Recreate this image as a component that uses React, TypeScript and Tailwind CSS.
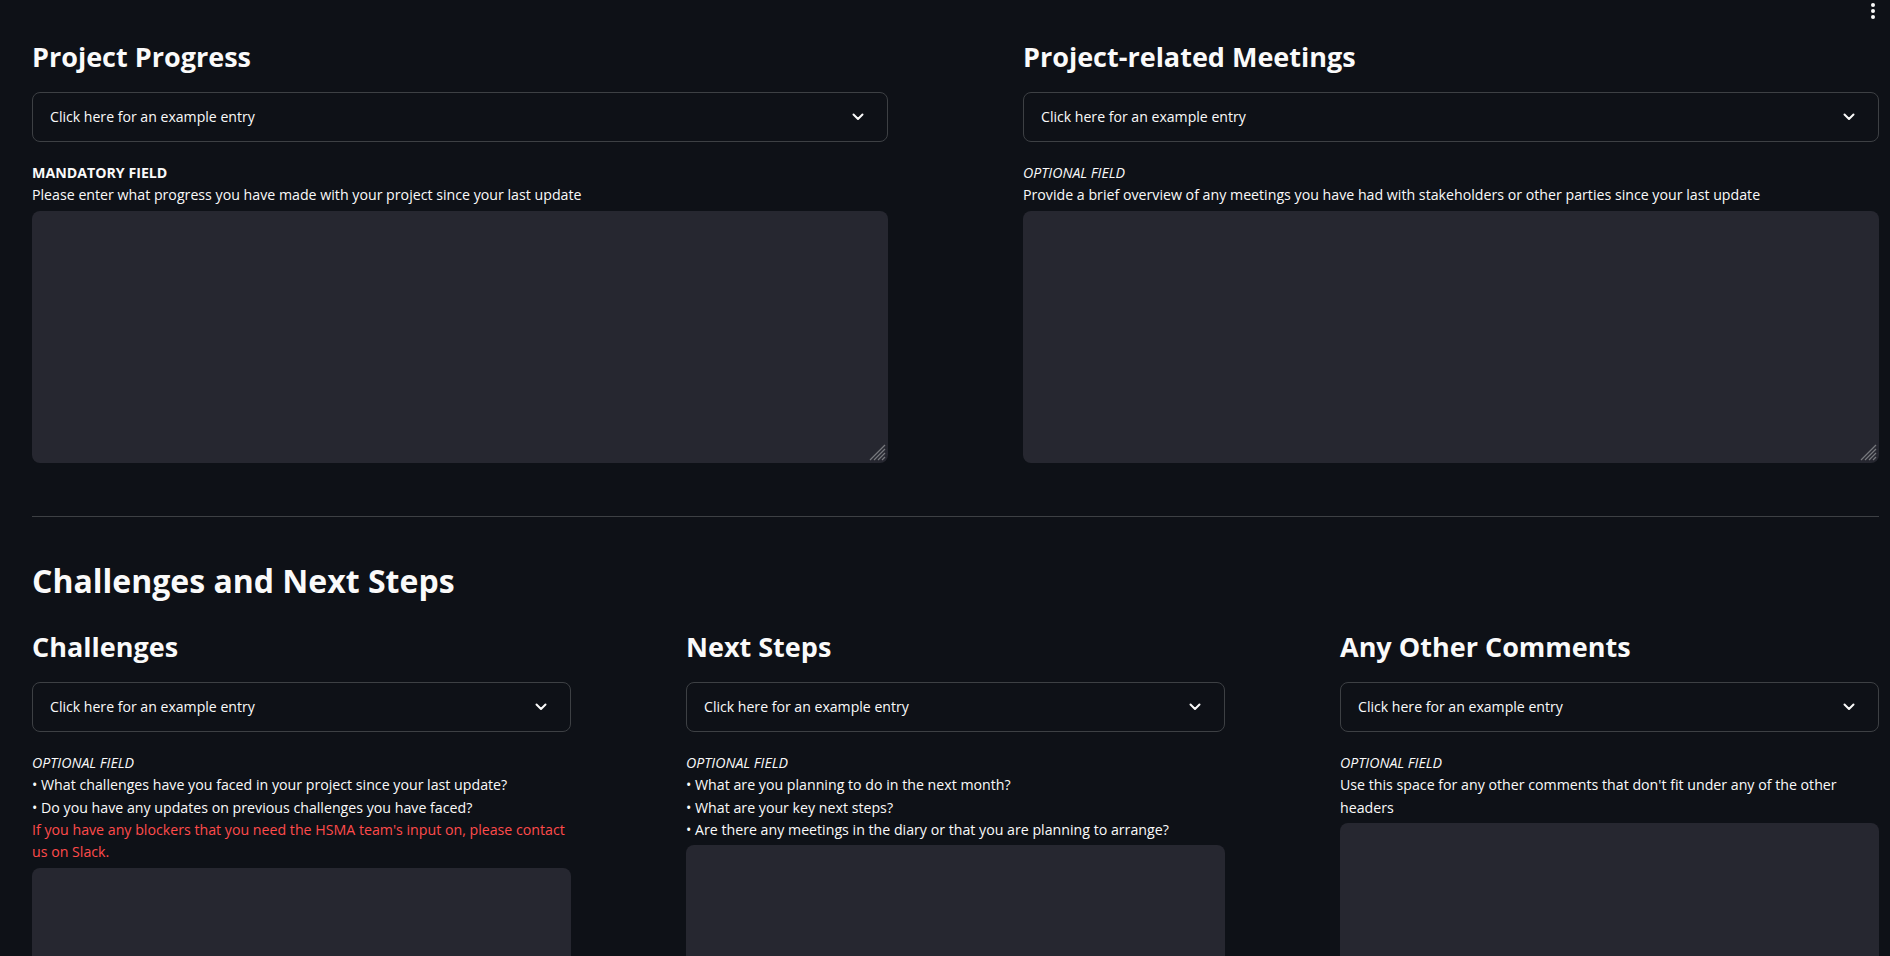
import React from 'react';

const ENTRY = 'Click here for an example entry';

function Chevron() {
  return (
    <svg width="12" height="8" viewBox="0 0 12 8" fill="none" className="shrink-0">
      <path d="M1.5 1.5 L6 6 L10.5 1.5" stroke="#fafafa" strokeWidth="2" strokeLinecap="round" strokeLinejoin="round" />
    </svg>
  );
}

function Grip() {
  return (
    <svg width="17" height="17" viewBox="0 0 17 17" className="absolute right-[2px] bottom-[2px] pointer-events-none">
      <g stroke="#77787d" strokeWidth="1.2">
        <line x1="1" y1="16" x2="16" y2="1" />
        <line x1="5" y1="16" x2="16" y2="5" />
        <line x1="9" y1="16" x2="16" y2="9" />
        <line x1="13" y1="16" x2="16" y2="13" />
      </g>
    </svg>
  );
}

function Expander() {
  return (
    <div className="h-[50px] flex items-center justify-between border border-[#3d4044] rounded-lg pl-[17px] pr-[23px] text-[14.1px] text-[#fafafa]">
      <span>{ENTRY}</span>
      <Chevron />
    </div>
  );
}

function Field({ title, children, height = 'h-[252px]' }: { title: string; children: React.ReactNode; height?: string }) {
  return (
    <div className="flex flex-col min-w-0">
      <h3 className="text-[27px] leading-[36px] font-bold text-[#fafafa] mb-[17px]">{title}</h3>
      <Expander />
      <div className="mt-[20px] text-[14.2px] leading-[22.4px] text-[#fafafa]">{children}</div>
      <div className={`relative mt-[4px] ${height} bg-[#262730] rounded-lg`}>
        <textarea className="w-full h-full bg-transparent resize-none outline-none rounded-lg p-3 text-sm text-[#fafafa]" />
        <Grip />
      </div>
    </div>
  );
}

export default function App() {
  return (
    <div className="relative h-[956px] overflow-hidden bg-[#0e1117] text-[#fafafa] font-['Open_Sans',sans-serif] pl-8 pr-[11px] pt-[39px]">
      {/* app menu */}
      <div className="absolute top-[3px] right-[15px] flex flex-col gap-[2px]">
        <span className="w-[4px] h-[4px] rounded-full bg-[#fafafa]" />
        <span className="w-[4px] h-[4px] rounded-full bg-[#fafafa]" />
        <span className="w-[4px] h-[4px] rounded-full bg-[#fafafa]" />
      </div>

      <div className="grid grid-cols-2 gap-x-[135px]">
        <Field title="Project Progress">
          <div className="font-bold">MANDATORY FIELD</div>
          <div>Please enter what progress you have made with your project since your last update</div>
        </Field>
        <Field title="Project-related Meetings">
          <div className="italic">OPTIONAL FIELD</div>
          <div>Provide a brief overview of any meetings you have had with stakeholders or other parties since your last update</div>
        </Field>
      </div>

      <div className="mt-[53px] h-px bg-[#3d4044]" />

      <h2 className="mt-[44px] text-[32px] leading-[40px] font-bold text-[#fafafa]">Challenges and Next Steps</h2>

      <div className="mt-[28px] grid grid-cols-3 gap-x-[115px]">
        <Field title="Challenges">
          <div className="italic">OPTIONAL FIELD</div>
          <div>• What challenges have you faced in your project since your last update?</div>
          <div>• Do you have any updates on previous challenges you have faced?</div>
          <div className="text-[#ff4b4b]">
            <span className="whitespace-nowrap">If you have any blockers that you need the HSMA team's input on, please contact</span>
            <br />
            us on Slack.
          </div>
        </Field>
        <Field title="Next Steps">
          <div className="italic">OPTIONAL FIELD</div>
          <div>• What are you planning to do in the next month?</div>
          <div>• What are your key next steps?</div>
          <div>• Are there any meetings in the diary or that you are planning to arrange?</div>
        </Field>
        <Field title="Any Other Comments">
          <div className="italic">OPTIONAL FIELD</div>
          <div>
            Use this space for any other comments that don't fit under any of the other
            <br />
            headers
          </div>
        </Field>
      </div>
    </div>
  );
}
